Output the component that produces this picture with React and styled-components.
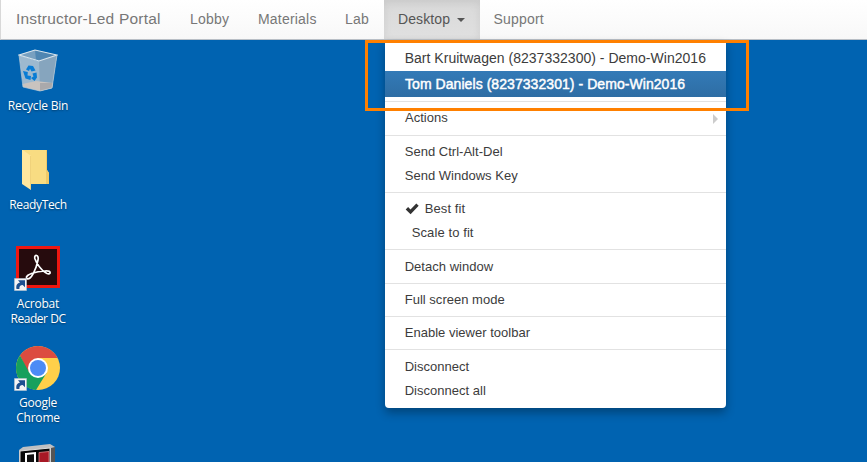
import React from "react";
import styled, { createGlobalStyle } from "styled-components";

const Global = createGlobalStyle`
  * { box-sizing: border-box; }
  body { margin: 0; overflow: hidden; background: #0063b1; font-family: "Liberation Sans", Arial, sans-serif; }
`;

const Screen = styled.div`
  width: 867px;
  height: 462px;
  overflow: hidden;
  background: #0063b1;
  position: relative;
`;

const NavBar = styled.nav`
  display: flex;
  height: 40px;
  background: linear-gradient(#ffffff, #f8f8f8);
  border-bottom: 1px solid #b9bfc6;
  border-left: 1px solid #d8d8d8;
`;

const NavItem = styled.a`
  display: flex;
  align-items: center;
  flex: none;
  width: ${(p) => p.$w}px;
  padding: 0 0 1px ${(p) => p.$pad ?? 14}px;
  font-size: ${(p) => (p.$brand ? 15.5 : 14)}px;
  letter-spacing: ${(p) => p.$ls ?? 0.2}px;
  white-space: nowrap;
  color: ${(p) => (p.$active ? "#555" : "#777")};
  background: ${(p) => (p.$active ? "linear-gradient(#d9d9d9, #e0e0e0)" : "none")};
  box-shadow: ${(p) => (p.$active ? "inset 0 3px 9px rgba(0,0,0,.075)" : "none")};
`;

const Caret = styled.span`
  margin: 2px 0 0 7px;
  border: 4px solid transparent;
  border-top-color: #555;
  border-bottom: 0;
`;

const Desktop = styled.main`
  display: flex;
  flex-direction: column;
  width: 76px;
`;

const Shortcut = styled.div`
  display: flex;
  flex-direction: column;
  align-items: center;
  flex: none;
  height: 99px;
  padding-top: 8px;
  svg { flex: none; margin: 0 0 2px; }
`;

const Label = styled.span`
  display: block;
  height: 15px;
  color: #fff;
  font: 12px/15px "Open Sans", "Noto Sans", sans-serif;
  letter-spacing: ${(p) => p.$ls ?? -0.2}px;
  white-space: nowrap;
  text-shadow: 0 1px 2px rgba(0, 0, 0, 0.4);
`;

const Menu = styled.div`
  position: absolute;
  left: 385px;
  top: 40px;
  width: 341px;
  height: 368px;
  padding-top: 5px;
  background: #fff;
  border-radius: 0 0 4px 4px;
  box-shadow: 0 5px 10px rgba(0, 0, 0, 0.3);
`;

const MenuItem = styled.div`
  display: flex;
  align-items: center;
  height: ${(p) => (p.$large ? 26 : 24)}px;
  padding: ${(p) => (p.$drop ? 1 : 0)}px 7px ${(p) => (p.$lift ? 1 : 0)}px ${(p) => p.$indent ?? 19.7}px;
  font-size: ${(p) => (p.$large ? 14 : 13)}px;
  letter-spacing: ${(p) => p.$ls ?? 0.02}px;
  white-space: nowrap;
  color: ${(p) => (p.$selected ? "#fff" : "#3c3c3c")};
  background: ${(p) => (p.$selected ? "linear-gradient(#337ab7, #2e6da4)" : "none")};
  -webkit-text-stroke: ${(p) => (p.$selected ? "0.45px #fff" : "0")};
  svg { margin-right: 6px; }
`;

const Divider = styled.div`
  height: 1px;
  margin: ${(p) => p.$top ?? 4}px 0 ${(p) => p.$bottom ?? 4}px;
  background: #e2e2e2;
`;

const SubArrow = styled.span`
  margin: 2px 1px 0 auto;
  border: 5px solid transparent;
  border-left-color: #ccc;
  border-right: 0;
`;

const Highlight = styled.div`
  position: absolute;
  left: 365px;
  top: 40px;
  width: 384px;
  height: 71px;
  border: 3px solid #ff8000;
`;

const LinkBadge = () => (
  <g>
    <path d="M.5 32.500h12v12H.5z" fill="#f4f4f4" stroke="#b8c4d0" strokeWidth=".6" />
    <path d="M2.500 43c-.8-4 1-6.300 3.600-6.300L4 34.300h7v7L8.700 39C6.200 39 5.200 40.500 5.400 43z" fill="#1d4f8f" />
  </g>
);

const RecycleIcon = () => (
  <svg width="40" height="48" viewBox="0 2 40 48">
    <path d="M1 9 20 15 39 9 34 42 22 45 5 40z" fill="#9db9cf" />
    <path d="M21 15 39 9 34 42 22 45z" fill="#86a5be" />
    <path d="M1 9 17 4 39 9 21 15z" fill="#4f86b2" />
    <path d="M17 4 18 14 1 9z" fill="#78a0c0" />
    <path d="M4.500 38 18 35 34.800 37 34 42 22 45 5 41z" fill="#c9c3bf" />
    <path d="M22 37 34.800 37 34 42 22 45z" fill="#aaa9ab" />
    <path d="M1 9 17 4 39 9 21 15z" fill="none" stroke="#dce7ee" strokeWidth="1.100" />
    <path d="M1 9 5 41 22 45 34 42 39 9" fill="none" stroke="#b9cbd9" strokeWidth=".7" />
    <g fill="#087cd4">
      <path d="M8 23.500 10.500 19.500 15 20 17.500 24.500 13.500 25.500 12 22.800 11 25z" />
      <path d="M5 25 9.800 26 9.500 29.500 13 30 12.500 34 7.500 32.500z" />
      <path d="M14.500 27.500 18.500 26.500 19 31.500 16.500 35 13 32 15.500 30.500z" />
    </g>
  </svg>
);

const FolderIcon = () => (
  <svg width="40" height="48" viewBox="0 0 40 48">
    <path d="M5 3h24v20l2 3v11H10z" fill="#f8dc82" />
    <path d="M28 3h1v20l2 3v11h-3z" fill="#efca68" />
    <path d="M4 3h1l8 6v34L4 37z" fill="#ffe79f" />
    <path d="M12.500 9v33" stroke="#f0d27b" />
  </svg>
);

const AcrobatIcon = () => (
  <svg width="48" height="48" viewBox="0 0 48 48">
    <path d="M2 0h44v42H2z" fill="#ee1711" />
    <path d="M5 3h38v36H5z" fill="#260b0d" />
    <path d="M12.500 32.500C11 28 23 25.500 31 25c7-.5 6 4 2 2.500C27 25 22 16 20.800 12.500c-.9-4.500 4.500-4 3.200 1.500C22.500 22 17 35.500 12.500 32.500z" fill="none" stroke="#fff" strokeWidth="1.700" />
    <LinkBadge />
  </svg>
);

const ChromeIcon = () => (
  <svg width="48" height="48" viewBox="0 -1 48 48">
    <circle cx="24" cy="22" r="22" fill="#ffd04a" />
    <path d="M24 12h19.600A22 22 0 0 0 6 9.500l8.500 18z" fill="#dc4c40" />
    <path d="M6 9.500A22 22 0 0 0 22 44l10.500-17L15 26z" fill="#16a05d" />
    <circle cx="24" cy="22" r="10" fill="#fff" />
    <circle cx="24" cy="22" r="8" fill="#4c8bf5" />
    <LinkBadge />
  </svg>
);

const AppIcon = () => (
  <svg width="40" height="48" viewBox="0 0 40 48">
    <path d="M1 6 5 3 32 0 37 3v43H1z" fill="#bfc0c2" />
    <path d="M2 7 32 4v42H2z" fill="#080808" stroke="#ddd" />
    <path d="M33 4 37 3v43h-4z" fill="#555" />
    <path d="M8 10 17 9v17H8z" fill="#111" stroke="#fff" strokeWidth="2" />
    <path d="M21 8.500 31 7.500v18H21z" fill="#a71925" stroke="#d88" strokeWidth=".8" />
  </svg>
);

const Check = () => (
  <svg width="14" height="12" viewBox="0 0 14 12">
    <path d="M.7 6.500 3.100 4.100 5.500 6.400 11.300.500 13.700 2.800 5.600 11.200z" fill="#333" />
  </svg>
);

export default function App() {
  return (
    <>
      <Global />
      <Screen>
        <NavBar>
          <NavItem $w={175} $pad={15} $brand $ls={0.2}>Instructor-Led Portal</NavItem>
          <NavItem $w={68}>Lobby</NavItem>
          <NavItem $w={87}>Materials</NavItem>
          <NavItem $w={53}>Lab</NavItem>
          <NavItem $w={96} $active $ls={0.1}>Desktop<Caret /></NavItem>
          <NavItem $w={80} $pad={13.5} $ls={0.18}>Support</NavItem>
        </NavBar>
        <Desktop>
          <Shortcut><RecycleIcon /><Label>Recycle Bin</Label></Shortcut>
          <Shortcut><FolderIcon /><Label $ls={-0.35}>ReadyTech</Label></Shortcut>
          <Shortcut><AcrobatIcon /><Label>Acrobat</Label><Label $ls={-0.45}>Reader DC</Label></Shortcut>
          <Shortcut><ChromeIcon /><Label>Google</Label><Label>Chrome</Label></Shortcut>
          <Shortcut><AppIcon /></Shortcut>
        </Desktop>
        <Menu>
          <MenuItem $large>Bart Kruitwagen (8237332300) - Demo-Win2016</MenuItem>
          <MenuItem $large $selected $indent={20} $ls={0.06}>Tom Daniels (8237332301) - Demo-Win2016</MenuItem>
          <Divider />
          <MenuItem $lift $indent={20}>Actions<SubArrow /></MenuItem>
          <Divider $top={5} />
          <MenuItem $lift>Send Ctrl-Alt-Del</MenuItem>
          <MenuItem $lift>Send Windows Key</MenuItem>
          <Divider />
          <MenuItem $lift $ls={0.1}><Check />Best fit</MenuItem>
          <MenuItem $lift $indent={26.7} $ls={0.1}>Scale to fit</MenuItem>
          <Divider />
          <MenuItem>Detach window</MenuItem>
          <Divider $top={5} />
          <MenuItem $lift>Full screen mode</MenuItem>
          <Divider />
          <MenuItem $lift>Enable viewer toolbar</MenuItem>
          <Divider />
          <MenuItem $drop>Disconnect</MenuItem>
          <MenuItem $drop>Disconnect all</MenuItem>
        </Menu>
        <Highlight />
      </Screen>
    </>
  );
}
